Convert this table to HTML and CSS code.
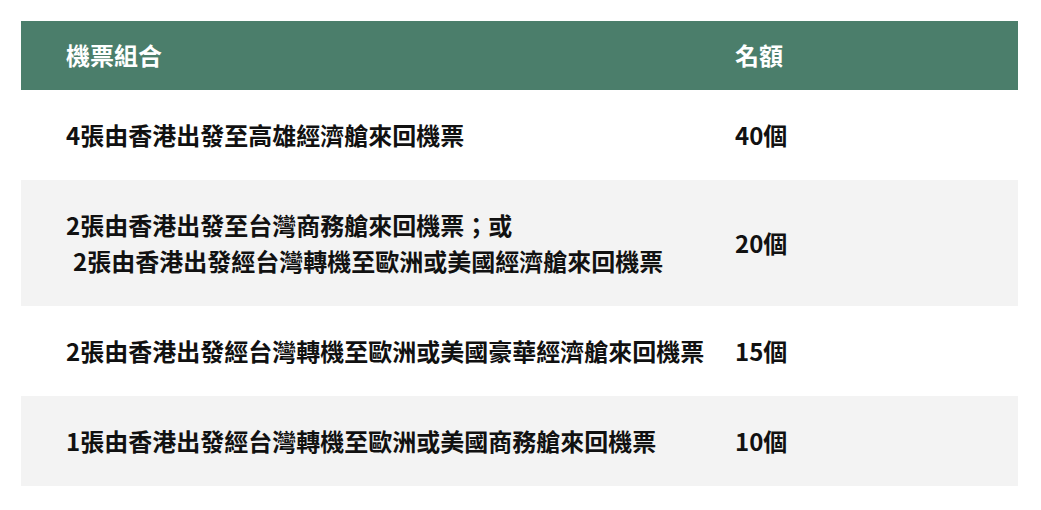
FILE: index.html
```html
<!DOCTYPE html>
<html lang="zh-Hant">
<head>
<meta charset="utf-8">
<title>機票組合</title>
<link rel="stylesheet" href="styles.css">
</head>
<body>
<div class="table">
  <div class="row head">
    <div class="cell c1">機票組合</div>
    <div class="cell c2">名額</div>
  </div>
  <div class="row">
    <div class="cell c1">4張由香港出發至高雄經濟艙來回機票</div>
    <div class="cell c2">40個</div>
  </div>
  <div class="row alt">
    <div class="cell c1">2張由香港出發至台灣商務艙來回機票；或<br><span class="sp"></span>2張由香港出發經台灣轉機至歐洲或美國經濟艙來回機票</div>
    <div class="cell c2">20個</div>
  </div>
  <div class="row">
    <div class="cell c1">2張由香港出發經台灣轉機至歐洲或美國豪華經濟艙來回機票</div>
    <div class="cell c2">15個</div>
  </div>
  <div class="row alt">
    <div class="cell c1">1張由香港出發經台灣轉機至歐洲或美國商務艙來回機票</div>
    <div class="cell c2">10個</div>
  </div>
</div>
</body>
</html>
```
FILE: styles.css
```css
html, body {
  margin: 0;
  padding: 0;
  background: #ffffff;
}
body {
  padding: 21px 23px 0 21px;
  font-family: "Noto Sans CJK TC", "Noto Sans", sans-serif;
  font-weight: 700;
  font-size: 24px;
  color: #111111;
}
.table {
  width: 997px;
  display: flex;
  flex-direction: column;
}
.row {
  display: grid;
  grid-template-columns: 699px 1fr;
  align-items: center;
  background: #ffffff;
}
.row.alt {
  background: #f3f3f3;
}
.cell {
  line-height: 36px;
  padding: 27px 15px;
}
.cell.c1 {
  padding-left: 45px;
}
.head {
  background: #4b7e6b;
  color: #ffffff;
}
.head .cell {
  padding-top: 16px;
  padding-bottom: 17px;
}
.sp {
  display: inline-block;
  width: 7px;
}
```
